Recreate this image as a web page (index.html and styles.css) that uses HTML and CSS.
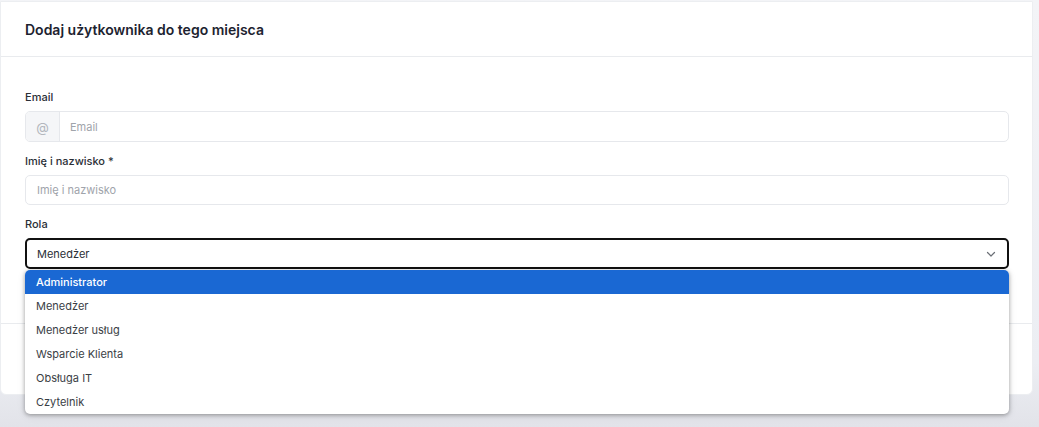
FILE: index.html
```html
<!DOCTYPE html>
<html lang="pl">
<head>
<meta charset="utf-8">
<link rel="stylesheet" href="styles.css">
</head>
<body>
<div class="page">
  <div class="modal">
    <div class="modal-header">
      <h2 class="title">Dodaj użytkownika do tego miejsca</h2>
    </div>
    <div class="modal-body">
      <div class="field">
        <label class="label">Email</label>
        <div class="input-group">
          <span class="addon">@</span>
          <span class="input placeholder">Email</span>
        </div>
      </div>
      <div class="field">
        <label class="label">Imię i nazwisko *</label>
        <div class="input-box"><span class="placeholder">Imię i nazwisko</span></div>
      </div>
      <div class="field select-field">
        <label class="label">Rola</label>
        <div class="select">
          <span>Menedżer</span>
          <svg class="chevron" width="12" height="12" viewBox="0 0 12 12"><path d="M2.5 4.5 L6 8 L9.5 4.5" fill="none" stroke="#6b6f76" stroke-width="1.2" stroke-linecap="round" stroke-linejoin="round"/></svg>
        </div>
        <ul class="dropdown">
          <li class="opt active">Administrator</li>
          <li class="opt">Menedżer</li>
          <li class="opt">Menedżer usług</li>
          <li class="opt">Wsparcie Klienta</li>
          <li class="opt">Obsługa IT</li>
          <li class="opt">Czytelnik</li>
        </ul>
      </div>
    </div>
    <div class="modal-footer"></div>
  </div>
</div>
</body>
</html>
```
FILE: styles.css
```css
* { box-sizing: border-box; }
html, body { margin: 0; padding: 0; }
body {
  width: 1039px;
  height: 427px;
  overflow: hidden;
  background: #e9eaf0;
  font-family: "Inter", "Open Sans", sans-serif;
  color: #212529;
}
.page {
  width: 1039px;
  height: 427px;
  padding: 1px 6px 0 0;
  background: linear-gradient(to bottom, #f3f4f7 0%, #eceef3 85%, #e2e3e9 100%);
}
.modal {
  width: 1033px;
  height: 394px;
  background: #fff;
  border: 1px solid #eceef1;
  border-radius: 0 0 6px 6px;
  display: flex;
  flex-direction: column;
}
.modal-header {
  height: 55px;
  border-bottom: 1px solid #e9ebee;
  display: flex;
  align-items: center;
  padding-left: 24px;
}
.title {
  margin: 0;
  font-size: 14px;
  font-weight: 600;
  color: #1d2330;
  letter-spacing: 0;
}
.modal-body {
  padding: 33px 23px 0 24px;
  height: 267px;
  border-bottom: 1px solid #e9ebee;
}
.field { margin-bottom: 12px; }
.label {
  display: block;
  font-size: 11px;
  font-weight: 500;
  color: #2b2f36;
  margin-bottom: 7px;
  line-height: 14px;
}
.input-group {
  display: flex;
  height: 31px;
  border: 1px solid #e6e8ec;
  border-radius: 5px;
  overflow: hidden;
}
.addon {
  width: 34px;
  background: #f5f6f8;
  border-right: 1px solid #e6e8ec;
  display: flex;
  align-items: center;
  justify-content: center;
  color: #b3b7be;
  font-size: 13px;
}
.input {
  flex: 1;
  display: flex;
  align-items: center;
  padding-left: 10px;
}
.placeholder {
  font-size: 11px;
  color: #a0a4ab;
}
.input-box {
  height: 30px;
  border: 1px solid #e6e8ec;
  border-radius: 5px;
  display: flex;
  align-items: center;
  padding-left: 11px;
}
.select-field { position: relative; }
.select {
  height: 31px;
  border: 2px solid #111;
  border-radius: 5px;
  display: flex;
  align-items: center;
  justify-content: space-between;
  padding: 0 10px 0 10px;
  font-size: 11px;
  color: #2b2f36;
}
.chevron { display: block; }
.dropdown {
  position: absolute;
  left: 0;
  right: 0;
  top: 53px;
  margin: 0;
  padding: 0;
  list-style: none;
  background: #fff;
  border-radius: 5px;
  box-shadow: 0 1px 4px rgba(0,0,0,0.35), 0 2px 10px rgba(0,0,0,0.08);
  overflow: hidden;
  z-index: 2;
}
.opt {
  height: 24px;
  display: flex;
  align-items: center;
  padding-left: 11px;
  font-size: 11px;
  color: #3a3e45;
}
.opt.active {
  background: #1a68d3;
  color: #fff;
  font-weight: 500;
}
.modal-footer { flex: 1; }
```
